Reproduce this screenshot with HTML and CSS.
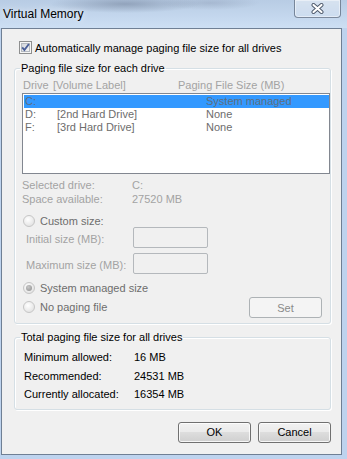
FILE: index.html
```html
<!DOCTYPE html>
<html lang="en">
<head>
<meta charset="UTF-8" />
<title>Virtual Memory</title>
<link rel="stylesheet" href="styles.css">
</head>
<body>
<div class="window">
    <div class="titlebar">
        <span class="title">Virtual Memory</span>
        <div class="close">
            <svg width="13" height="11" viewBox="0 0 13 11">
                <path d="M2.5 2 L10.5 9 M10.5 2 L2.5 9" stroke="#4a5668" stroke-width="4" stroke-linecap="round" />
                <path d="M2.5 2 L10.5 9 M10.5 2 L2.5 9" stroke="#ffffff" stroke-width="2.2" stroke-linecap="round" />
            </svg>
        </div>
    </div>

    <div class="client">
        <label class="check-row">
            <svg class="checkbox" width="13" height="13" viewBox="0 0 13 13">
                <defs>
                    <linearGradient id="cbfill" x1="0" y1="0" x2="1" y2="1">
                        <stop offset="0" stop-color="#cfd3d9" />
                        <stop offset="1" stop-color="#f7f7f7" />
                    </linearGradient>
                </defs>
                <rect x="0.5" y="0.5" width="12" height="12" fill="#f6f6f6" stroke="#8e8f8f" />
                <rect x="2.5" y="2.5" width="8" height="8" fill="url(#cbfill)" stroke="#b4b9c0" />
                <path d="M3.2 6.4 L5.4 9 L9.9 3" fill="none" stroke="#4b5f98" stroke-width="1.9" />
            </svg>
            Automatically manage paging file size for all drives
        </label>

        <fieldset class="group group-drives">
            <legend>Paging file size for each drive</legend>
            <div class="list-head">
                <span>Drive</span><span>[Volume Label]</span><span>Paging File Size (MB)</span>
            </div>
            <div class="listbox">
                <div class="row selected"><span>C:</span><span></span><span>System managed</span></div>
                <div class="row"><span>D:</span><span>[2nd Hard Drive]</span><span>None</span></div>
                <div class="row"><span>F:</span><span>[3rd Hard Drive]</span><span>None</span></div>
            </div>

            <div class="info">
                <span>Selected drive:</span><span>C:</span>
                <span>Space available:</span><span>27520 MB</span>
            </div>

            <div class="radio-row radio-custom"><span class="radio"></span>Custom size:</div>
            <div class="field-row">
                <span class="field-label">Initial size (MB):</span>
                <span class="textbox"></span>
            </div>
            <div class="field-row">
                <span class="field-label">Maximum size (MB):</span>
                <span class="textbox"></span>
            </div>

            <div class="bottom-row">
                <div class="radios">
                    <div class="radio-row"><span class="radio checked"></span>System managed size</div>
                    <div class="radio-row"><span class="radio"></span>No paging file</div>
                </div>
                <button class="btn btn-set" disabled>Set</button>
            </div>
        </fieldset>

        <fieldset class="group group-total">
            <legend>Total paging file size for all drives</legend>
            <div class="totals">
                <span>Minimum allowed:</span><span>16 MB</span>
                <span>Recommended:</span><span>24531 MB</span>
                <span>Currently allocated:</span><span>16354 MB</span>
            </div>
        </fieldset>

        <div class="actions">
            <button class="btn">OK</button>
            <button class="btn">Cancel</button>
        </div>
    </div>
</div>
</body>
</html>
```

FILE: styles.css
```css
body {
    margin: 0;
    width: 347px;
    height: 459px;
    overflow: hidden;
    background: #bed3ee;
    font-family: "Liberation Sans", Arial, sans-serif;
    font-size: 11px;
    color: #000;
}

.window {
    display: flex;
    flex-direction: column;
}

/* Aero title bar */
.titlebar {
    height: 28px;
    display: flex;
    justify-content: space-between;
    align-items: flex-start;
    background:
        radial-gradient(ellipse 75px 9px at 125px 4px, rgba(105, 120, 145, 0.5), rgba(105, 120, 145, 0)),
        radial-gradient(ellipse 50px 7px at 210px 3px, rgba(130, 145, 170, 0.35), rgba(130, 145, 170, 0)),
        linear-gradient(#b8cce4, #c6d9ef 70%, #cddff3);
}

.title {
    padding-left: 3px;
    line-height: 28px;
    font-size: 12px;
    text-shadow: 0 0 6px rgba(255, 255, 255, 0.9);
}

.close {
    width: 45px;
    height: 17px;
    margin-right: 6px;
    display: flex;
    align-items: center;
    justify-content: center;
    border: 1px solid rgba(45, 60, 85, 0.55);
    border-top: none;
    border-radius: 0 0 4px 4px;
    background: linear-gradient(rgba(255, 255, 255, 0.45), rgba(255, 255, 255, 0.15));
    box-shadow: inset 0 0 0 1px rgba(255, 255, 255, 0.45);
}

.client {
    box-sizing: border-box;
    width: 341px;
    height: 427px;
    margin-left: 1px;
    border: 1px solid #6f7f94;
    background: #f0f0f0;
    display: flex;
    flex-direction: column;
}

.check-row {
    display: flex;
    align-items: center;
    gap: 3px;
    height: 13px;
    margin: 12px 0 0 17px;
}

/* group boxes */
.group {
    margin: 7px 10px 0 12px;
    padding: 0 0 5px 7px;
    min-width: 0;
    border: 1px solid #d5dfe5;
    border-radius: 3px;
    box-shadow: inset 1px 1px 0 #fff, 1px 1px 0 #fff;
}

.group legend {
    margin-left: -2px;
    padding: 0 1px;
    line-height: 14px;
}

.group-total {
    margin-top: 6px;
}

.list-head {
    display: grid;
    grid-template-columns: 30px 125px auto;
    margin-top: 3px;
    padding-left: 1px;
    line-height: 14px;
    color: #a3a3a3;
}

.listbox {
    box-sizing: border-box;
    height: 81px;
    margin-top: 1px;
    padding: 1px 0 0 1px;
    border: 1px solid #828790;
    background: #fff;
    color: #6d6d6d;
}

.row {
    display: grid;
    grid-template-columns: 32px 149px auto;
    height: 13px;
    line-height: 13px;
    padding-left: 1px;
}

.row.selected {
    background: #3399ff;
    color: #5f6e80;
}

.info {
    display: grid;
    grid-template-columns: 110px auto;
    margin-top: 4px;
    line-height: 14px;
    color: #a3a3a3;
}

.radio-row {
    display: flex;
    align-items: center;
    gap: 5px;
    height: 14px;
    padding-left: 1px;
    color: #6d6d6d;
}

.radio-custom {
    height: 13px;
    margin-top: 8px;
}

.radio {
    box-sizing: border-box;
    width: 12px;
    height: 12px;
    border: 1px solid #c6c6c6;
    border-radius: 50%;
    background: radial-gradient(circle at 40% 35%, #ffffff, #e4e4e4 75%);
    display: flex;
    align-items: center;
    justify-content: center;
}

.radio.checked::after {
    content: "";
    width: 6px;
    height: 6px;
    border-radius: 50%;
    background: radial-gradient(circle at 40% 35%, #c8c8c8, #8d8d8d);
}

.field-row {
    display: grid;
    grid-template-columns: 111px 75px;
    align-items: center;
    height: 21px;
    color: #a3a3a3;
}

.field-row + .field-row {
    margin-top: 5px;
}

.field-label {
    padding: 2px 0 0 4px;
}

.textbox {
    box-sizing: border-box;
    height: 21px;
    border: 1px solid #b4b8bc;
    border-radius: 2px;
    background: #f0f0f0;
}

.bottom-row {
    display: flex;
    justify-content: space-between;
    align-items: flex-start;
    margin-top: 7px;
}

.radios .radio-row + .radio-row {
    margin-top: 5px;
}

/* buttons */
.btn {
    box-sizing: border-box;
    width: 73px;
    height: 21px;
    padding: 0;
    font: inherit;
    color: #000;
    border: 1px solid #707070;
    border-radius: 3px;
    background: linear-gradient(#f2f2f2 0%, #ebebeb 45%, #dddddd 50%, #cfcfcf 100%);
    box-shadow: inset 0 0 0 1px rgba(255, 255, 255, 0.8);
}

.btn-set {
    margin: 16px 8px 0 0;
    color: #8a8a8a;
    border-color: #adb2b5;
    background: #f4f4f4;
    box-shadow: none;
}

.totals {
    display: grid;
    grid-template-columns: 110px auto;
    margin-top: 4px;
    padding-left: 2px;
    line-height: 18.5px;
}

.actions {
    display: flex;
    justify-content: flex-end;
    gap: 7px;
    margin-top: 12px;
    padding-right: 10px;
}
```
